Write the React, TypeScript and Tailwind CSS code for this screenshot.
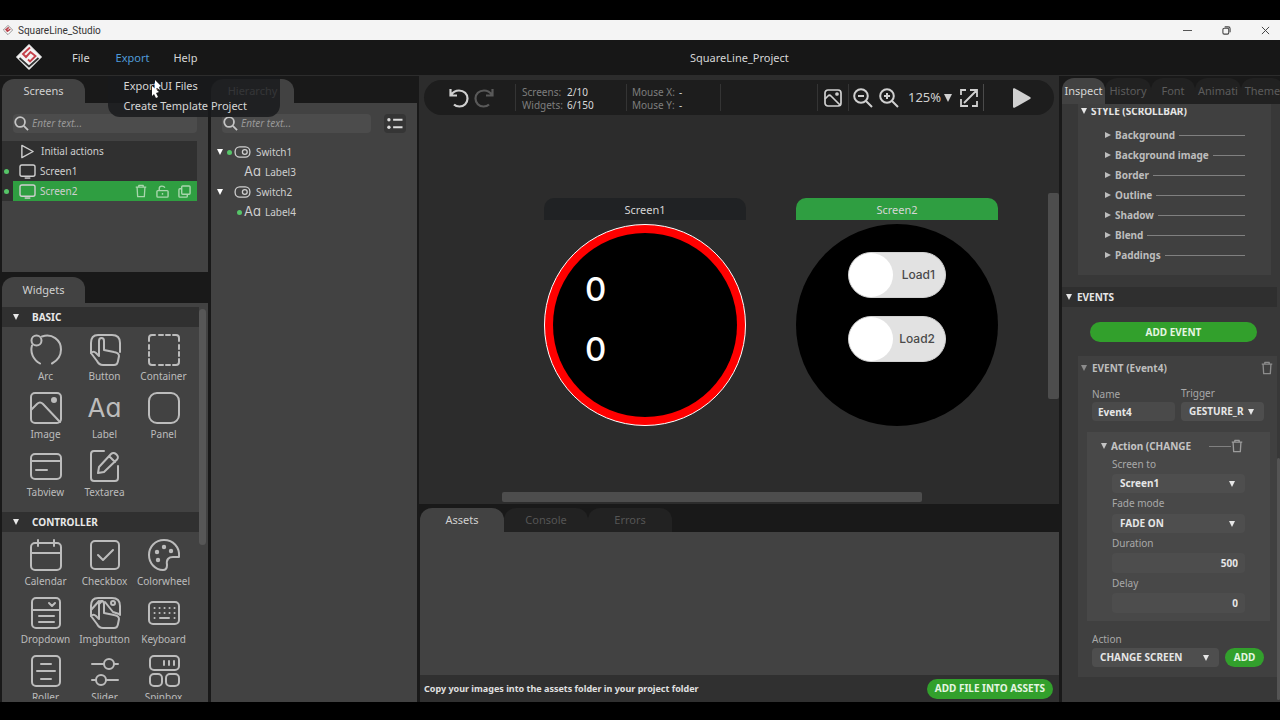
import React from 'react';

type IconName =
    | 'arc' | 'button' | 'container' | 'image' | 'panel' | 'tabview' | 'textarea'
    | 'calendar' | 'checkbox' | 'colorwheel' | 'dropdown' | 'imgbutton' | 'keyboard'
    | 'roller' | 'slider' | 'spinbox';

const HAND = 'M2 19c2-2 4-1 5 0l3 3V7c0-4 5-4 5 0v9l10 2c3 .5 5 1 5 4l-1 5c-.5 3-2 4-4 4H14c-3 0-5-2-6-4z';

const WIDGET_ICONS: Record<IconName, React.ReactNode> = {
    arc: (
        <>
            <circle cx="6.500" cy="6.500" r="5" />
            <path d="M12 2.500C22-1 31 6 31 15.500c0 6-3.500 11-9 14M2 11.500c-2 7 1 14 8 18" />
        </>
    ),
    button: (
        <>
            <path d="M2 19V9c0-5 2-8 7-8h14c5 0 8 3 8 8v9" />
            <path d={HAND} />
        </>
    ),
    container: (
        <path d="M1 7V4c0-2 1-3 3-3h3M11 1h4M18 1h4M25 1h3c2 0 3 1 3 3v3M31 11v4M31 18v4M31 25v3c0 2-1 3-3 3h-3M22 31h-4M15 31h-4M7 31H4c-2 0-3-1-3-3v-3M1 22v-4M1 15v-4" />
    ),
    image: (
        <>
            <rect x="1" y="1" width="30" height="30" rx="4" />
            <path d="M1 18l6-6c2-2 4-2 6 0l17 18" />
            <circle cx="24" cy="8" r="2" fill="currentColor" />
        </>
    ),
    panel: <rect x="1" y="1" width="30" height="30" rx="8" />,
    tabview: (
        <>
            <rect x="1" y="4" width="30" height="25" rx="4" />
            <path d="M1 11h30M6 20h11" />
        </>
    ),
    textarea: (
        <>
            <path d="M15 1H5C3 1 2 2 2 4v24c0 2 1 3 3 3h21c2 0 3-1 3-3V16" />
            <path d="M22 4c2-2 4-1 5.500.500s2 3.500.500 5L15 22l-6 1 1-6zM20 6l6 6" />
        </>
    ),
    calendar: (
        <>
            <rect x="1" y="4" width="30" height="27" rx="4" />
            <path d="M1 14h30M8 1v6M24 1v6" />
        </>
    ),
    checkbox: (
        <>
            <rect x="2" y="2" width="28" height="28" rx="4" />
            <path d="M9 16l5 5 10-10" />
        </>
    ),
    colorwheel: (
        <>
            <path d="M31 18C32 8 25 1 16 1S1 8 1 16s6 15 14 15c3 0 4-2 4-5-1-6 2-8 6-8z" />
            <g fill="currentColor">
                <circle cx="16" cy="8" r="1.200" />
                <circle cx="9" cy="13" r="1.200" />
                <circle cx="23" cy="12" r="1.200" />
                <circle cx="10" cy="21" r="1.200" />
            </g>
        </>
    ),
    dropdown: (
        <>
            <rect x="2" y="1" width="28" height="30" rx="4" />
            <path d="M2 13h28M19 6l3 3 3-3M9 19h15M9 25h15" />
        </>
    ),
    imgbutton: (
        <>
            <path d="M2 19V9c0-5 2-8 7-8h14c5 0 8 3 8 8v9M2 13l8-9M10 7l3-3M16 5l8 10 6 2" />
            <path d={HAND} />
            <circle cx="24" cy="6" r="2" />
        </>
    ),
    keyboard: (
        <>
            <rect x="1" y="5" width="30" height="22" rx="4" />
            <path d="M6.500 11h.1M11.500 11h.1M16.500 11h.1M21.500 11h.1M26.500 11h.1M6.500 16h.1M11.500 16h.1M16.500 16h.1M21.500 16h.1M26.500 16h.1M6.500 21h.1M12 21h9M26.500 21h.1" />
        </>
    ),
    roller: (
        <>
            <rect x="2" y="1" width="28" height="30" rx="4" />
            <path d="M11 9h10M7 16h18M11 24h10" />
        </>
    ),
    slider: (
        <>
            <path d="M3 9h12M25 9h4M3 25h4M17 25h12" />
            <circle cx="20" cy="9" r="5" />
            <circle cx="12" cy="25" r="5" />
        </>
    ),
    spinbox: (
        <>
            <rect x="2" y="1" width="29" height="14" rx="4" />
            <rect x="2" y="19" width="12" height="12" rx="4" />
            <rect x="18" y="19" width="13" height="12" rx="4" />
            <path d="M16 6v4M21 6v4M26 6v4" />
        </>
    ),
};

interface Widget {
    label: string;
    icon?: IconName;
}

const BASIC: Widget[] = [
    { label: 'Arc', icon: 'arc' },
    { label: 'Button', icon: 'button' },
    { label: 'Container', icon: 'container' },
    { label: 'Image', icon: 'image' },
    { label: 'Label' },
    { label: 'Panel', icon: 'panel' },
    { label: 'Tabview', icon: 'tabview' },
    { label: 'Textarea', icon: 'textarea' },
];

const CONTROLLER: Widget[] = [
    { label: 'Calendar', icon: 'calendar' },
    { label: 'Checkbox', icon: 'checkbox' },
    { label: 'Colorwheel', icon: 'colorwheel' },
    { label: 'Dropdown', icon: 'dropdown' },
    { label: 'Imgbutton', icon: 'imgbutton' },
    { label: 'Keyboard', icon: 'keyboard' },
    { label: 'Roller', icon: 'roller' },
    { label: 'Slider', icon: 'slider' },
    { label: 'Spinbox', icon: 'spinbox' },
];

const STYLE_ROWS = ['Background', 'Background image', 'Border', 'Outline', 'Shadow', 'Blend', 'Paddings'];

const CaretDown = ({ className = '' }: { className?: string }) => (
    <svg viewBox="0 0 8 8" className={`h-[6px] w-[6px] shrink-0 fill-current ${className}`}>
        <path d="M0 0h8L4 8z" />
    </svg>
);

const CaretRight = () => (
    <svg viewBox="0 0 8 8" className="h-[6px] w-[6px] shrink-0 fill-current">
        <path d="M0 0l8 4-8 4z" />
    </svg>
);

const Dot = ({ on }: { on: boolean }) => (
    <span className={`h-[5px] w-[5px] shrink-0 rounded-full ${on ? 'bg-[#56c568]' : ''}`} />
);

const Logo = ({ className }: { className: string }) => (
    <svg viewBox="0 0 26 26" className={className}>
        <path d="M13 .5L25.500 13 13 25.500.500 13z" fill="#f4f4f4" stroke="#f4f4f4" strokeLinejoin="round" />
        <path d="M14 3.500L7 10l3 3 4.500-5 5 4-5.500 5.500-2-2" fill="none" stroke="#c4404a" strokeWidth="1.900" />
        <path d="M3.500 14L13 22.500 22.500 14" fill="none" stroke="#333" strokeWidth="1.800" />
    </svg>
);

const Trash = ({ className = '' }: { className?: string }) => (
    <svg viewBox="0 0 13 16" className={`h-[14px] w-[12px] fill-none stroke-current ${className}`} strokeWidth="1.500">
        <path d="M.500 3.500h12M4 3.500V1.500h5v2M2 3.500l.700 11h7.600l.700-11" strokeLinejoin="round" />
    </svg>
);

const SearchBox = ({ label }: { label: string }) => (
    <div className="flex h-[19px] min-w-0 flex-1 items-center gap-[3px] rounded bg-[#4c4c4c] pl-px">
        <svg viewBox="0 0 16 16" className="h-[15px] w-[15px] shrink-0 fill-none stroke-[#c4c4c4]" strokeWidth="1.900">
            <circle cx="6.500" cy="6.500" r="5.200" />
            <path d="M10.500 10.500L15 15" />
        </svg>
        <input
            type="text"
            aria-label={label}
            placeholder="Enter text..."
            className="min-w-0 flex-1 bg-transparent text-[10px] italic text-gray-200 outline-none placeholder:text-[#989898]"
        />
    </div>
);

const SectionHeader = ({ title }: { title: string }) => (
    <h3 className="flex h-5 items-center gap-[13px] bg-[#303030] pl-[11px] text-[10px] font-bold text-[#e8e8e8]">
        <CaretDown />
        {title}
    </h3>
);

const WidgetGrid = ({ items }: { items: Widget[] }) => (
    <div className="grid grid-cols-3 pt-[6px] pr-[6px] pb-[5px] pl-[14px]">
        {items.map((item) => (
            <button key={item.label} type="button" className="flex h-[58px] flex-col items-center text-[10px] text-[#bcbcbc]">
                {item.icon ? (
                    <svg
                        viewBox="-1 -1 34 34"
                        className="h-[34px] w-[34px] shrink-0 fill-none stroke-current"
                        strokeWidth="2"
                        strokeLinecap="round"
                        strokeLinejoin="round"
                    >
                        {WIDGET_ICONS[item.icon]}
                    </svg>
                ) : (
                    <span className="h-[34px] font-['Inter',sans-serif] text-[26px] leading-[34px] font-normal [font-feature-settings:'cv11']">
                        Aa
                    </span>
                )}
                <span className="mt-px leading-4">{item.label}</span>
            </button>
        ))}
    </div>
);

interface SelectProps {
    id: string;
    value: string;
    className?: string;
}

const Select = ({ id, value, className = '' }: SelectProps) => (
    <div className={`relative ${className}`}>
        <select
            id={id}
            defaultValue={value}
            className="h-[19px] w-full appearance-none rounded bg-[#4e4e4e] pl-2 text-[10px] font-bold text-[#e6e6e6]"
        >
            <option>{value}</option>
        </select>
        <CaretDown className="pointer-events-none absolute top-[7px] right-[10px] text-[#e6e6e6]" />
    </div>
);

const ScreensPanel = () => (
    <section className="flex h-[196px] flex-col pt-[3px]">
        <button type="button" className="h-[24px] w-[83px] rounded-t-xl bg-[#424242] text-[11px] text-[#d0d0d0]">
            Screens
        </button>
        <div className="flex flex-1 flex-col bg-[#424242]">
            <div className="flex px-[11px] pt-[11px]">
                <SearchBox label="Search screens" />
            </div>
            <ul className="mt-2 mr-[11px] bg-[#303030] text-[10px] text-[#cfcfcf]">
                <li className="flex h-5 items-center gap-[6px] pl-[18px]">
                    <svg viewBox="0 0 16 16" className="h-[15px] w-[15px] fill-none stroke-current" strokeWidth="1.500">
                        <path d="M2 1.500L14 8 2 14.500z" strokeLinejoin="round" />
                    </svg>
                    Initial actions
                </li>
                {['Screen1', 'Screen2'].map((name) => {
                    const active = name === 'Screen2';
                    return (
                        <li key={name} className="flex h-5 items-center gap-1 pl-[2px]">
                            <Dot on />
                            <div className={`flex h-5 flex-1 items-center gap-[4px] pl-[6px] ${active ? 'bg-[#2f9e41]' : ''}`}>
                                <svg viewBox="0 0 18 16" className="h-[15px] w-[17px] fill-none stroke-current" strokeWidth="1.500">
                                    <rect x="1" y="1" width="16" height="12" rx="2" />
                                    <path d="M6 15h6" />
                                </svg>
                                {name}
                                {active && (
                                    <div className="mr-[6px] ml-auto flex items-center gap-[9px] text-[#a9d6ad]">
                                        <button type="button" aria-label="Delete screen"><Trash /></button>
                                        <button type="button" aria-label="Unlock screen">
                                            <svg viewBox="0 0 14 14" className="h-[13px] w-[13px] fill-none stroke-current" strokeWidth="1.500">
                                                <rect x="1" y="6" width="12" height="7" rx="1" />
                                                <path d="M3.500 6V3.500c0-3 5-3 6-.500M7 8.500v2" />
                                            </svg>
                                        </button>
                                        <button type="button" aria-label="Duplicate screen">
                                            <svg viewBox="0 0 14 14" className="h-[13px] w-[13px] fill-none stroke-current" strokeWidth="1.500">
                                                <rect x="4" y="1" width="9" height="9" rx="1" />
                                                <path d="M4 4H2c-.600 0-1 .400-1 1v7c0 .600.400 1 1 1h7c.600 0 1-.400 1-1v-2" />
                                            </svg>
                                        </button>
                                    </div>
                                )}
                            </div>
                        </li>
                    );
                })}
            </ul>
        </div>
    </section>
);

const WidgetsPanel = () => (
    <section className="flex min-h-0 flex-1 flex-col pt-[5px]">
        <button type="button" className="h-[26px] w-[83px] shrink-0 rounded-t-xl bg-[#424242] text-[11px] text-[#d0d0d0]">
            Widgets
        </button>
        <div className="flex min-h-0 flex-1 bg-[#424242] pt-1 pb-[3px]">
            <div className="min-w-0 flex-1 overflow-hidden">
                <SectionHeader title="BASIC" />
                <WidgetGrid items={BASIC} />
                <SectionHeader title="CONTROLLER" />
                <WidgetGrid items={CONTROLLER} />
            </div>
            <div className="mt-[2px] mr-[2px] h-[236px] w-[7px] rounded bg-[#575757]" />
        </div>
    </section>
);

const HIERARCHY = [
    { name: 'Switch1', kind: 'switch', dot: true },
    { name: 'Label3', kind: 'label', dot: false },
    { name: 'Switch2', kind: 'switch', dot: false },
    { name: 'Label4', kind: 'label', dot: true },
];

const HierarchyPanel = () => (
    <section className="flex w-[206px] shrink-0 flex-col pt-[3px]">
        <button type="button" className="h-[24px] w-[83px] rounded-t-xl bg-[#424242] text-[11px] text-[#d0d0d0]">
            Hierarchy
        </button>
        <div className="flex-1 bg-[#424242]">
            <div className="flex items-center gap-[13px] px-[11px] pt-[11px]">
                <SearchBox label="Search hierarchy" />
                <button type="button" aria-label="List options" className="rounded bg-[#353535] p-[2px] text-[#dcdcdc]">
                    <svg viewBox="0 0 18 16" className="h-[15px] w-[18px] fill-current">
                        <circle cx="2.500" cy="4" r="1.800" />
                        <circle cx="2.500" cy="12" r="1.800" />
                        <path d="M7 3h10v2H7zM7 11h10v2H7z" />
                    </svg>
                </button>
            </div>
            <ul className="mt-[9px] text-[10px] text-[#cfcfcf]">
                {HIERARCHY.map((node) =>
                    node.kind === 'switch' ? (
                        <li key={node.name} className="flex h-5 items-center pl-[6px]">
                            <CaretDown className="mr-[4px] text-white" />
                            <Dot on={node.dot} />
                            <svg viewBox="0 0 18 13" className="mr-[5px] ml-[2px] h-[12px] w-[17px] fill-none stroke-current" strokeWidth="1.400">
                                <rect x="1" y="1" width="16" height="11" rx="5" />
                                <circle cx="11.500" cy="6.500" r="2.600" />
                            </svg>
                            {node.name}
                        </li>
                    ) : (
                        <li key={node.name} className="flex h-5 items-center pl-[26px]">
                            <Dot on={node.dot} />
                            <span className="mr-[4px] ml-[2px] font-['Inter',sans-serif] text-[13px] [font-feature-settings:'cv11']">Aa</span>
                            {node.name}
                        </li>
                    ),
                )}
            </ul>
        </div>
    </section>
);

const Divider = () => <span className="h-[27px] w-px shrink-0 bg-[#343434]" />;

const Toolbar = () => (
    <div className="mx-[5px] mt-1 flex h-[35px] shrink-0 items-center rounded-full bg-[#1d1d1d] text-[#d0d0d0]">
        <div className="flex w-[91px] shrink-0 gap-[5px] pl-[25px]">
            <button type="button" aria-label="Undo">
                <svg viewBox="0 0 20 20" className="h-5 w-5 fill-none stroke-current" strokeWidth="2.200">
                    <path d="M1.500 1v6.500H8M2 7c2-3 5-4.500 8-4.500 5 0 8.500 3.500 8.500 8S15 18.500 10.500 18.500c-2.500 0-4-.500-5.500-2" />
                </svg>
            </button>
            <button type="button" aria-label="Redo" className="text-[#595959]">
                <svg viewBox="0 0 20 20" className="h-5 w-5 fill-none stroke-current" strokeWidth="2.200">
                    <path d="M18.500 1v6.500H12M18 7c-2-3-5-4.500-8-4.500-5 0-8.500 3.500-8.500 8S5 18.500 9.500 18.500c2.500 0 4-.500 5.500-2" />
                </svg>
            </button>
        </div>
        <Divider />
        <dl className="grid w-[110px] shrink-0 grid-cols-[45px_1fr] pt-[2px] pl-[6px] text-[10px] leading-[13px] text-[#7d7d7d]">
            <dt>Screens:</dt>
            <dd className="text-[#dadada]">2/10</dd>
            <dt>Widgets:</dt>
            <dd className="text-[#dadada]">6/150</dd>
        </dl>
        <Divider />
        <dl className="grid w-[93px] shrink-0 grid-cols-[47px_1fr] pt-[2px] pl-[5px] text-[10px] leading-[13px] text-[#7d7d7d]">
            <dt>Mouse X:</dt>
            <dd className="text-[#dadada]">-</dd>
            <dt>Mouse Y:</dt>
            <dd className="text-[#dadada]">-</dd>
        </dl>
        <Divider />
        <div className="ml-auto flex shrink-0 items-center">
            <Divider />
            <button type="button" aria-label="Background image" className="mx-[6px]">
                <svg viewBox="0 0 18 18" className="h-[18px] w-[18px] fill-none stroke-current" strokeWidth="1.700">
                    <rect x="1" y="1" width="16" height="16" rx="3" />
                    <path d="M1 10l3-3c1-1 2-1 3 0l9 9" />
                    <circle cx="13" cy="5" r="1" />
                </svg>
            </button>
            <Divider />
            <button type="button" aria-label="Zoom out" className="ml-1">
                <svg viewBox="0 0 20 20" className="h-5 w-5 fill-none stroke-current" strokeWidth="2">
                    <circle cx="8" cy="8" r="6.800" />
                    <path d="M13 13l6 6M5 8h6" />
                </svg>
            </button>
            <button type="button" aria-label="Zoom in" className="ml-[6px]">
                <svg viewBox="0 0 20 20" className="h-5 w-5 fill-none stroke-current" strokeWidth="2">
                    <circle cx="8" cy="8" r="6.800" />
                    <path d="M13 13l6 6M5 8h6M8 5v6" />
                </svg>
            </button>
            <button type="button" className="ml-[9px] flex w-[52px] items-center gap-[3px] text-[13px]">
                125%
                <svg viewBox="0 0 8 8" className="h-[8px] w-[8px] fill-current"><path d="M0 0h8L4 8z" /></svg>
            </button>
            <button type="button" aria-label="Fit to view">
                <svg viewBox="0 0 18 18" className="h-[18px] w-[18px] fill-none stroke-current" strokeWidth="1.800">
                    <path d="M1 6V1h5M17 12v5h-5M4 14L16 2M10 1h7v7M1 10v7h7" />
                </svg>
            </button>
            <span className="ml-[5px] h-[27px] w-px bg-[#4a4a4a]" />
            <button type="button" aria-label="Play" className="mr-[23px] ml-[29px]">
                <svg viewBox="0 0 18 20" className="h-5 w-[18px] fill-current">
                    <path d="M0 1.500C0 0 1 0 2 .500L17 9c1 .500 1 1.500 0 2L2 19.500c-1 .500-2 .500-2-1z" />
                </svg>
            </button>
        </div>
    </div>
);

const LoadSwitch = ({ label }: { label: string }) => (
    <label className="flex h-[46px] w-[98px] items-center justify-between rounded-full border border-[#d2d2d2] bg-[#e2e2e2] pr-[10px] font-['Inter',sans-serif] text-[12px] font-medium text-[#4a4a4a]">
        <input type="checkbox" className="sr-only" />
        <span className="h-[44px] w-[44px] rounded-full bg-white" />
        {label}
    </label>
);

const Canvas = () => (
    <div className="flex min-h-0 flex-1 flex-col bg-[#2c2c2c]">
        <Toolbar />
        <div className="flex min-h-0 flex-1">
            <div className="flex min-w-0 flex-1 gap-[50px] overflow-hidden pt-[83px] pl-[125px] text-[11px] text-[#d6d6d6]">
                <div className="w-[202px] shrink-0">
                    <div className="h-[22px] rounded-t-[10px] bg-[#202224] text-center leading-[23px]">Screen1</div>
                    <div className="mt-1 h-[202px] rounded-full border border-white bg-[#ff0000] p-2">
                        <div className="h-full rounded-full bg-black pt-[26px] pl-[32px] font-['Inter',sans-serif] text-[33px] leading-[60px] font-medium text-white">
                            <p>0</p>
                            <p>0</p>
                        </div>
                    </div>
                </div>
                <div className="w-[202px] shrink-0">
                    <div className="h-[22px] rounded-t-[10px] bg-[#2f9e41] text-center leading-[23px]">Screen2</div>
                    <div className="mt-1 flex h-[202px] flex-col items-center gap-[18px] rounded-full bg-black pt-[28px]">
                        <LoadSwitch label="Load1" />
                        <LoadSwitch label="Load2" />
                    </div>
                </div>
            </div>
            <div className="mt-[78px] h-[206px] w-[11px] shrink-0 rounded-[2px] bg-[#4d4d4d]" />
        </div>
        <div className="mb-[2px] ml-[83px] h-[10px] w-[420px] rounded-[2px] bg-[#4d4d4d]" />
    </div>
);

const AssetsPanel = () => (
    <div className="flex h-[198px] shrink-0 flex-col pl-px">
        <div className="flex pt-1 text-[11px]">
            <button type="button" className="h-[24px] w-[84px] rounded-t-xl bg-[#424242] text-[#d0d0d0]">Assets</button>
            <button type="button" className="h-[24px] w-[84px] rounded-t-xl bg-[#222] text-[#555]">Console</button>
            <button type="button" className="h-[24px] w-[84px] rounded-t-xl bg-[#222] text-[#555]">Errors</button>
        </div>
        <div className="flex-1 bg-[#424242]" />
        <div className="flex h-[27px] items-center justify-between bg-[#303030] pr-[6px] pl-1">
            <p className="text-[9px] font-bold text-[#e0e0e0]">Copy your images into the assets folder in your project folder</p>
            <button type="button" className="h-5 rounded-full bg-[#32a02c] px-2 text-[10px] font-bold text-[#e4f5e2]">
                ADD FILE INTO ASSETS
            </button>
        </div>
    </div>
);

const NumberField = ({ id, label, value }: { id: string; label: string; value: string }) => (
    <>
        <label htmlFor={id} className="block h-5 leading-5">{label}</label>
        <input
            id={id}
            type="text"
            defaultValue={value}
            className="block h-5 w-[133px] rounded bg-[#4d4d4d] pr-[7px] text-right text-[10px] font-bold text-[#e6e6e6]"
        />
    </>
);

const Inspector = () => (
    <aside className="flex w-[218px] shrink-0 flex-col overflow-hidden pt-[2px]">
        <div className="flex h-[26px] shrink-0 text-[11px] text-[#5c5c5c]">
            <button type="button" className="w-[43px] shrink-0 rounded-t-xl bg-[#424242] text-[#d6d6d6]">Inspect</button>
            <button type="button" className="w-[46px] shrink-0 rounded-t-xl bg-[#212121]">History</button>
            <button type="button" className="w-[44px] shrink-0 rounded-t-xl bg-[#212121]">Font</button>
            <button type="button" className="w-[46px] shrink-0 rounded-t-xl bg-[#212121]">Animati</button>
            <button type="button" className="w-[43px] shrink-0 rounded-t-xl bg-[#212121]">Theme</button>
        </div>
        <div className="flex min-h-0 flex-1 bg-[#383838]">
            <div className="min-w-0 flex-1">
                <div className="mr-[6px] ml-4 overflow-hidden border-t-4 border-[#404040] bg-[#404040] pb-[10px]">
                    <h3 className="-mt-[7px] flex h-5 items-center gap-1 pl-[3px] text-[10px] font-bold text-[#e6e6e6]">
                        <CaretDown />
                        STYLE (SCROLLBAR)
                    </h3>
                    <ul className="mt-1 text-[10px] font-bold text-[#bdbdbd]">
                        {STYLE_ROWS.map((row) => (
                            <li key={row} className="flex h-5 items-center gap-1 pr-[26px] pl-[27px]">
                                <CaretRight />
                                {row}
                                <span className="h-px flex-1 bg-[#808080]" />
                            </li>
                        ))}
                    </ul>
                </div>
                <h3 className="mt-3 flex h-5 items-center gap-[5px] bg-[#2f2f2f] pl-1 text-[10px] font-bold text-[#e6e6e6]">
                    <CaretDown />
                    EVENTS
                </h3>
                <button type="button" className="mt-[15px] ml-7 block h-5 w-[167px] rounded-full bg-[#32a02c] text-[10px] font-bold text-[#e4f5e2]">
                    ADD EVENT
                </button>
                <div className="mt-[14px] ml-4 bg-[#404040] pb-[10px] text-[10px] text-[#a8a8a8]">
                    <div className="flex h-6 items-center gap-[5px] pr-1 pl-[3px] font-bold text-[#bdbdbd]">
                        <CaretDown className="text-[#8c8c8c]" />
                        EVENT (Event4)
                        <button type="button" aria-label="Delete event" className="ml-auto text-[#8c8c8c]"><Trash /></button>
                    </div>
                    <div className="mt-[4px] flex gap-[6px] pl-[14px]">
                        <div className="w-[83px]">
                            <label htmlFor="event-name" className="block h-[18px] leading-[20px]">Name</label>
                            <input
                                id="event-name"
                                type="text"
                                defaultValue="Event4"
                                className="block h-[19px] w-full rounded bg-[#4a4a4a] pl-[6px] text-[10px] font-bold text-[#e6e6e6]"
                            />
                        </div>
                        <div className="w-[83px]">
                            <label htmlFor="event-trigger" className="block h-[18px] leading-[18px]">Trigger</label>
                            <Select id="event-trigger" value="GESTURE_R" />
                        </div>
                    </div>
                    <div className="mt-[11px] mr-[7px] ml-[9px] bg-[#484848] pb-2 pl-[25px]">
                        <div className="-ml-[11px] flex h-6 items-center gap-1 pt-1 font-bold text-[#c4c4c4]">
                            <CaretDown />
                            Action (CHANGE
                            <span className="ml-auto h-px w-[22px] bg-[#808080]" />
                            <button type="button" aria-label="Delete action" className="-ml-1 mr-[27px] text-[#9c9c9c]"><Trash /></button>
                        </div>
                        <label htmlFor="screen-to" className="block h-[18px] leading-[16px]">Screen to</label>
                        <Select id="screen-to" value="Screen1" className="w-[133px]" />
                        <label htmlFor="fade-mode" className="block h-[21px] leading-[21px]">Fade mode</label>
                        <Select id="fade-mode" value="FADE ON" className="w-[133px]" />
                        <NumberField id="duration" label="Duration" value="500" />
                        <NumberField id="delay" label="Delay" value="0" />
                    </div>
                    <div className="mt-[9px] pl-[14px]">
                        <label htmlFor="action" className="block h-[18px] leading-[18px]">Action</label>
                        <div className="flex gap-[6px]">
                            <Select id="action" value="CHANGE SCREEN" className="w-[127px]" />
                            <button type="button" className="h-[19px] w-[39px] rounded-full bg-[#32a02c] font-bold text-[#e4f5e2]">ADD</button>
                        </div>
                    </div>
                </div>
            </div>
            <div className="mt-auto mb-[2px] h-[242px] w-[3px] rounded bg-[#545454]" />
        </div>
    </aside>
);

const TitleBar = () => (
    <header className="flex h-5 shrink-0 items-center bg-[#f4f4f4] pr-[10px] pl-[3px] font-['Roboto',sans-serif] text-[10px] text-[#333]">
        <svg viewBox="0 0 26 26" className="mr-[5px] h-[10px] w-[10px]">
            <path d="M13 1L25 13 13 25 1 13z" fill="#fff" stroke="#777" strokeWidth="2" />
            <path d="M15 6L8 12l5 3 6-4M13 17l-4-3" fill="none" stroke="#b8404a" strokeWidth="4" />
        </svg>
        SquareLine_Studio
        <div className="ml-auto flex items-center gap-[30px]">
            <button type="button" aria-label="Minimize" className="flex h-[10px] w-[9px] items-center"><span className="h-px w-full bg-[#555]" /></button>
            <button type="button" aria-label="Restore">
                <svg viewBox="0 0 10 10" className="h-[9px] w-[9px] fill-none stroke-[#444]" strokeWidth="1.200">
                    <rect x="1" y="2.500" width="6.500" height="6.500" rx="1.500" />
                    <path d="M3 1h4c1.200 0 2 .800 2 2v4" />
                </svg>
            </button>
            <button type="button" aria-label="Close">
                <svg viewBox="0 0 10 10" className="h-[9px] w-[9px] stroke-[#444]" strokeWidth="1.100"><path d="M1 1l8 8M9 1L1 9" /></svg>
            </button>
        </div>
    </header>
);

const MenuBar = () => (
    <nav className="relative flex h-9 shrink-0 items-center border-b border-[#2c2c2c] bg-[#171717] pt-[2px] pl-4 text-[11px] text-[#d6d6d6]">
        <Logo className="mt-[2px] h-[26px] w-[26px] self-start" />
        <button type="button" className="ml-[30px]">File</button>
        <div className="relative ml-[26px]">
            <button type="button" className="text-[#4f9bd9]">Export</button>
            <div className="absolute top-[26px] -left-2 z-10 w-[172px] rounded-b-xl bg-[#191a1c]/85 pb-px">
                <button type="button" className="block h-5 w-full pl-4 text-left">Export UI Files</button>
                <button type="button" className="block h-5 w-full pl-4 text-left">Create Template Project</button>
                <svg viewBox="0 0 12 18" className="absolute top-1 left-[43px] h-[18px] w-[12px] fill-white">
                    <path d="M4 0l6 6-2 1 1 3-3-2-2 2zM1 6l7 6-3 1 2 4-2 1-2-4-2 2z" />
                </svg>
            </div>
        </div>
        <button type="button" className="ml-6">Help</button>
        <h1 className="absolute left-[690px]">SquareLine_Project</h1>
    </nav>
);

export default function App() {
    return (
        <div className="flex h-screen flex-col overflow-hidden bg-black pt-5 pb-[18px] font-['Noto_Sans',sans-serif]">
            <TitleBar />
            <MenuBar />
            <main className="flex min-h-0 flex-1 bg-[#191919]">
                <div className="mr-[3px] ml-[2px] flex w-[206px] shrink-0 flex-col">
                    <ScreensPanel />
                    <WidgetsPanel />
                </div>
                <HierarchyPanel />
                <div className="mr-[3px] ml-[2px] flex min-w-0 flex-1 flex-col">
                    <Canvas />
                    <AssetsPanel />
                </div>
                <Inspector />
            </main>
        </div>
    );
}
